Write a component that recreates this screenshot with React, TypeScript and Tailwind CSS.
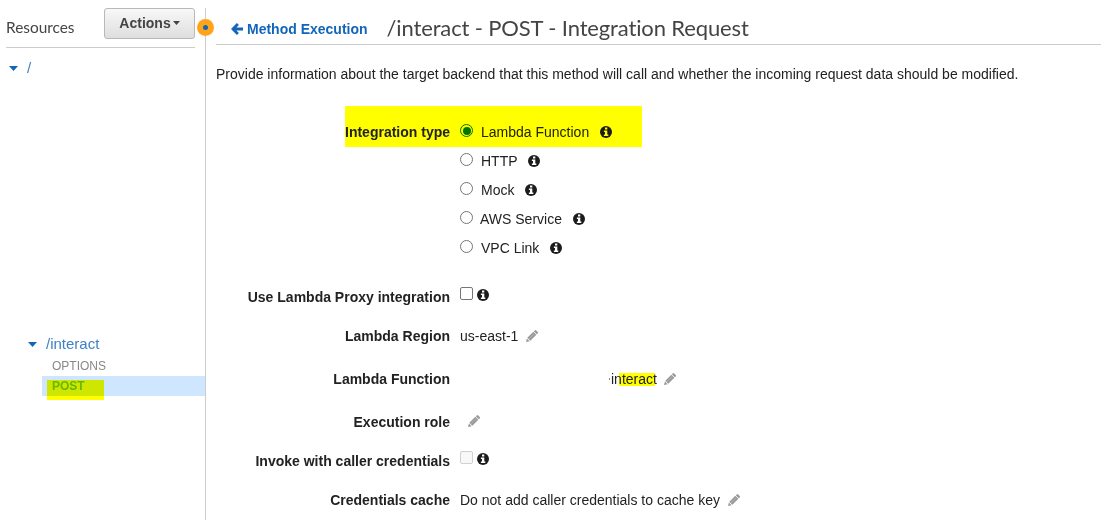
import type { ReactNode } from "react";

function InfoIcon({ className = "" }: { className?: string }) {
  return (
    <svg viewBox="0 0 12 12" className={`h-3 w-3 shrink-0 ${className}`} fill="none">
      <circle cx="6" cy="6" r="6" fill="#1c1c1c" />
      <path d="M5 1.5h2.3v2H5zM3.9 4.5h3.4v4H8.3V10H3.9V8.5H5V6H3.9z" fill="var(--info-mark, #fff)" />
    </svg>
  );
}

function PencilIcon({ className = "" }: { className?: string }) {
  return (
    <svg viewBox="0 0 12 12" className={`h-3 w-3 shrink-0 ${className}`} fill="#999">
      <path d="M8.7.4a1.1 1.1 0 0 1 1.5 0l1.5 1.5a1.1 1.1 0 0 1 0 1.5l-.9.9-3-3zM7.3 1.8l3 3-6 6-3-3zM.9 8.4l2.8 2.8L0 12z" />
      <path d="M3.1 8.7 8 3.8" stroke="#c8c8c8" strokeWidth=".6" />
    </svg>
  );
}

function ArrowLeftIcon() {
  return (
    <svg viewBox="0 0 12 12" className="h-3 w-3 shrink-0" fill="none" stroke="#1166bb" strokeWidth="2.8">
      <path d="M6.9 1 2 6l4.9 5M2 6h10" />
    </svg>
  );
}

function Caret({ className = "" }: { className?: string }) {
  return (
    <svg viewBox="0 0 8 4" preserveAspectRatio="none" className={`shrink-0 ${className}`} fill="currentColor">
      <path d="M0 0h8L4 4z" />
    </svg>
  );
}

function Radio({ checked = false }: { checked?: boolean }) {
  return (
    <span
      className={`relative -top-[2px] flex h-[13px] w-[13px] shrink-0 items-center justify-center rounded-full border ${
        checked ? "border-[#007500]" : "border-[#767676] bg-white"
      }`}
    >
      {checked && <span className="h-[8px] w-[8px] shrink-0 rounded-full bg-[#007500]" />}
    </span>
  );
}

function Option({ label, width }: { label: string; width: string }) {
  return (
    <div className="flex h-[29px] items-center pl-[254px]">
      <Radio />
      <span className={`-mt-[2px] whitespace-nowrap ${width}`}>{label}</span>
      <InfoIcon className="relative -top-px" />
    </div>
  );
}

function Row({ label, height = "h-[39px]", children }: { label: string; height?: string; children?: ReactNode }) {
  return (
    <div className={`flex items-center ${height}`}>
      <span className="mr-[10px] w-[244px] shrink-0 text-right font-bold whitespace-nowrap">{label}</span>
      {children}
    </div>
  );
}

function Sidebar() {
  return (
    <aside className="relative flex w-[206px] shrink-0 flex-col pt-2">
      <div className="ml-[6px] flex h-10 w-[189px] justify-between border-b border-[#ccc]">
        <h2 className="mt-[8px] font-[Lato] text-[15.4px] leading-[22px] text-[#444]">Resources</h2>
        <button className="flex h-[31px] w-[91px] items-center justify-center gap-[2px] rounded-[3px] border border-[#b9b9b9] bg-linear-to-b from-[#f8f8f8] to-[#dedede] pb-[2px] text-[14px] font-bold text-[#444]">
          Actions
          <Caret className="mt-px h-1 w-[7px]" />
        </button>
      </div>
      <div className="flex h-10 items-center pl-[9px] text-[#1166bb]">
        <Caret className="h-[5px] w-[9px]" />
        <span className="ml-[9px] text-[15px] text-[#4580c4]">/</span>
      </div>
      <div className="mt-[244px] flex h-6 items-center pl-[28px] text-[#1166bb]">
        <Caret className="h-[5px] w-[9px]" />
        <span className="ml-[9px] text-[15px] text-[#3f80c8]">/interact</span>
      </div>
      <div className="flex h-5 items-center pl-[52px] text-[12px] text-[#888]">OPTIONS</div>
      <div className="relative ml-[42px] flex h-5 w-[163px] items-center bg-[#cfe6ff] pl-[10px] text-[12px] font-bold">
        <span className="relative z-10 text-[#65b800]">POST</span>
        <span className="absolute top-1 left-[5px] h-5 w-[57px] bg-[#ffff00] mix-blend-multiply" />
      </div>
      <span className="absolute top-2 right-0 h-[512px] w-px bg-[#ccc]" />
      <span className="absolute top-[19px] -right-[8px] z-10 flex h-[17px] w-[17px] items-center justify-center rounded-full bg-[#ffa31a]">
        <span className="h-[5px] w-[5px] rounded-full bg-[#1166bb]" />
      </span>
    </aside>
  );
}

export default function App() {
  return (
    <div className="flex h-[520px] w-[1101px] overflow-hidden bg-white font-['Liberation_Sans',sans-serif] text-[14px] leading-5 text-[#222]">
      <Sidebar />
      <main className="min-w-0 flex-1">
        <header className="ml-[10px] flex h-[45px] border-b border-[#ccc] pl-[15px]">
          <a className="mt-[19px] flex h-5 items-center gap-1 font-bold whitespace-nowrap text-[#1166bb]">
            <ArrowLeftIcon />
            Method Execution
          </a>
          <h1 className="mt-[13px] ml-[19px] font-[Lato] text-[22px] leading-[30px] tracking-[-0.14px] whitespace-nowrap text-[#444]">
            /interact - POST - Integration Request
          </h1>
        </header>
        <p className="mt-[19px] ml-[10px] whitespace-nowrap">
          Provide information about the target backend that this method will call and whether the incoming request data
          should be modified.
        </p>
        <div className="mt-[22px] ml-[139px] flex h-[41px] w-[297px] items-center bg-[#ffff00] pt-3 [--info-mark:#ffff00]">
          <span className="-mt-[2px] w-[105px] text-right font-bold whitespace-nowrap">Integration type</span>
          <span className="ml-[10px] flex">
            <Radio checked />
          </span>
          <span className="-mt-[2px] ml-[8px] w-[119px] whitespace-nowrap text-[#222200]">Lambda Function</span>
          <InfoIcon className="relative -top-px" />
        </div>
        <Option label="HTTP" width="ml-[8px] w-[47px]" />
        <Option label="Mock" width="ml-[8px] w-[44px]" />
        <Option label="AWS Service" width="ml-[7px] w-[93px]" />
        <Option label="VPC Link" width="ml-[8px] w-[69px]" />
        <div className="mt-[14px]">
          <Row label="Use Lambda Proxy integration">
            <span className="relative -top-[3px] h-[13px] w-[13px] rounded-[2px] border border-[#767676]" />
            <InfoIcon className="relative -top-[2px] ml-1" />
          </Row>
          <Row label="Lambda Region">
            <span className="w-[66px]">us-east-1</span>
            <PencilIcon />
          </Row>
          <Row label="Lambda Function" height="h-[47px]">
            <span className="ml-[149px] h-[2px] w-px bg-[#889]" />
            <span className="ml-px flex w-[53px]">
              <span className="bg-[linear-gradient(#ff0,#ff0)] bg-[length:36px_13px] bg-[position:8px_4px] bg-no-repeat">
                interact
              </span>
            </span>
            <PencilIcon />
          </Row>
          <Row label="Execution role">
            <PencilIcon className="relative -top-px ml-2" />
          </Row>
          <Row label="Invoke with caller credentials">
            <span className="relative -top-[3px] h-[13px] w-[13px] rounded-[2px] border border-[#d0d0d0] bg-[#f8f8f8]" />
            <InfoIcon className="relative -top-[2px] ml-1" />
          </Row>
          <Row label="Credentials cache">
            <span className="w-[268px] whitespace-nowrap">Do not add caller credentials to cache key</span>
            <PencilIcon />
          </Row>
        </div>
      </main>
    </div>
  );
}
